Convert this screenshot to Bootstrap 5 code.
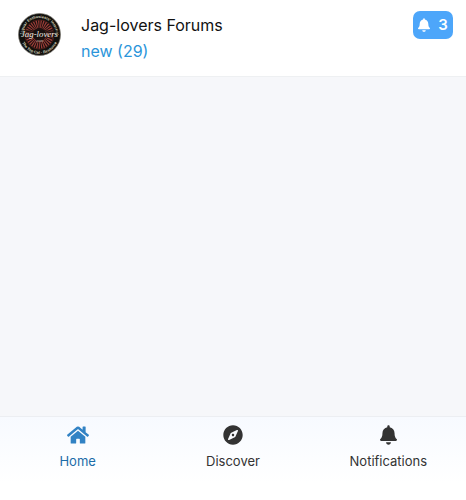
<!DOCTYPE html>
<html lang="en">
<head>
<meta charset="utf-8">
<meta name="viewport" content="width=device-width, initial-scale=1">
<title>Forums</title>
<link href="https://cdn.jsdelivr.net/npm/bootstrap@5.3.0/dist/css/bootstrap.min.css" rel="stylesheet">
<style>
body { font-family: Inter, "Liberation Sans", sans-serif; background: #f6f7fa; color: #111; }
.site-row { padding: 11px 13px 12px 18px; border-bottom: 1px solid #eef0f2; }
.site-logo { width: 43px; height: 45px; margin-top: 1px; margin-right: 20px; }
.site-text { font-size: 16px; line-height: 26px; }
.site-text a { color: #2b95da; }
.site-name { margin-top: 1px; }
.alert-count { background: #4da6fa; color: #fff; width: 40px; height: 28px; border-radius: 7px; font-size: 15px; font-weight: 600; line-height: 28px; }
.tab-bar { background: linear-gradient(#f7faff, #fff 80%); border-top: 1px solid #eceef2; padding: 8px 0 29px; }
.tab-item { color: #333; font-size: 13px; line-height: 20px; }
.tab-item svg { margin-bottom: 6px; }
.tab-item.active { color: #1b6ca8; }
.tab-item.active svg { color: #3182c4; }
</style>
<script src="https://cdn.jsdelivr.net/npm/bootstrap@5.3.0/dist/js/bootstrap.bundle.min.js"></script>
</head>
<body class="d-flex flex-column min-vh-100">
<header class="site-row d-flex align-items-start bg-white">
  <svg class="site-logo flex-shrink-0" viewBox="0 0 44 44" aria-label="Jag-lovers logo" role="img">
    <defs>
      <path id="arcTop" d="M5.500 25A16.800 16.800 0 1 1 38.500 25"/>
      <path id="arcBottom" d="M2.600 25A19.600 19.600 0 0 0 41.400 25"/>
    </defs>
    <circle cx="22" cy="22" r="21.500" fill="#11100d" stroke="#77746b" stroke-width=".7"/>
    <circle cx="22" cy="22" r="10.500" fill="none" stroke="#9c3c38" stroke-width="8" stroke-dasharray="1.100 .9"/>
    <circle cx="22" cy="22" r="15" fill="none" stroke="#5d211e" stroke-width=".7"/>
    <circle cx="22" cy="22" r="6.500" fill="#1d1110"/>
    <g fill="#d8d3bd" font-family="Liberation Sans, sans-serif" font-weight="700" font-size="4">
      <text text-anchor="middle"><textPath href="#arcTop" startOffset="50%">Jaguar Enthusiasts' Internet</textPath></text>
      <text text-anchor="middle"><textPath href="#arcBottom" startOffset="50%">The Top Cat · Resource</textPath></text>
    </g>
    <path d="M3 17.500h38v8H3z" fill="#11100d" opacity=".5"/>
    <text x="22" y="24.500" text-anchor="middle" fill="#f2eee4" font-family="Liberation Serif, serif" font-style="italic" font-size="9">Jag-lovers</text>
    <text x="22" y="29.500" text-anchor="middle" fill="#c9b8ab" font-family="Liberation Serif, serif" font-size="4">.com</text>
  </svg>
  <div class="site-text flex-grow-1">
    <div class="site-name">Jag-lovers Forums</div>
    <a href="#" class="text-decoration-none">new (29)</a>
  </div>
  <button type="button" class="alert-count btn p-0 border-0 d-flex align-items-center justify-content-center" aria-label="3 notifications">
    <svg class="me-2" width="12" height="14" viewBox="0 0 448 512" fill="currentColor" aria-hidden="true"><path d="M224 512c35.320 0 63.970-28.650 63.970-64H160.030c0 35.350 28.650 64 63.970 64zm215.390-149.710c-19.320-20.760-55.470-51.990-55.470-154.290 0-77.700-54.480-139.900-127.940-155.160V32c0-17.670-14.320-32-31.980-32s-31.980 14.330-31.980 32v20.840C118.560 68.100 64.080 130.300 64.080 208c0 102.300-36.150 133.530-55.470 154.290-6 6.450-8.660 14.160-8.610 21.710.11 16.400 12.980 32 32.100 32h383.800c19.120 0 32-15.600 32.100-32 .05-7.550-2.610-15.270-8.610-21.710z"/></svg><span>3</span>
  </button>
</header>
<main class="flex-grow-1"></main>
<nav class="tab-bar">
  <div class="row g-0 text-center">
    <a href="#" class="tab-item active col d-flex flex-column align-items-center text-decoration-none" aria-current="page">
      <svg width="22" height="20" viewBox="0 0 576 512" fill="currentColor" aria-hidden="true"><path d="M280.370 148.260L96 300.110V464a16 16 0 0 0 16 16l112.060-.29a16 16 0 0 0 15.920-16V368a16 16 0 0 1 16-16h64a16 16 0 0 1 16 16v95.640a16 16 0 0 0 16 16.050L464 480a16 16 0 0 0 16-16V300L295.670 148.260a12.190 12.190 0 0 0-15.300 0zM571.600 251.470L488 182.560V44.050a12 12 0 0 0-12-12h-56a12 12 0 0 0-12 12v72.610L318.470 43a48 48 0 0 0-61 0L4.340 251.470a12 12 0 0 0-1.600 16.900l25.500 31A12 12 0 0 0 45.150 301l235.220-193.740a12.190 12.190 0 0 1 15.300 0L530.900 301a12 12 0 0 0 16.900-1.600l25.500-31a12 12 0 0 0-1.700-16.930z"/></svg>
      <span>Home</span>
    </a>
    <a href="#" class="tab-item col d-flex flex-column align-items-center text-decoration-none">
      <svg width="20" height="20" viewBox="0 0 512 512" fill="currentColor" aria-hidden="true"><path transform="translate(8)" d="M225.380 233.370c-12.500 12.500-12.500 32.760 0 45.250 12.490 12.500 32.760 12.500 45.250 0 12.500-12.500 12.500-32.760 0-45.250-12.500-12.490-32.760-12.490-45.250 0zM248 8C111.030 8 0 119.030 0 256s111.030 248 248 248 248-111.030 248-248S384.970 8 248 8zm126.140 148.050L308.170 300.400a31.938 31.938 0 0 1-15.770 15.770l-144.340 65.970c-16.650 7.610-33.810-9.550-26.200-26.200l65.980-144.350a31.938 31.938 0 0 1 15.770-15.770l144.340-65.970c16.650-7.600 33.800 9.550 26.190 26.200z"/></svg>
      <span>Discover</span>
    </a>
    <a href="#" class="tab-item col d-flex flex-column align-items-center text-decoration-none">
      <svg width="17" height="20" viewBox="0 0 448 512" fill="currentColor" aria-hidden="true"><path d="M224 512c35.320 0 63.970-28.650 63.970-64H160.030c0 35.350 28.650 64 63.970 64zm215.390-149.710c-19.320-20.760-55.470-51.990-55.470-154.290 0-77.700-54.480-139.900-127.940-155.160V32c0-17.670-14.320-32-31.980-32s-31.980 14.330-31.980 32v20.840C118.560 68.100 64.080 130.300 64.080 208c0 102.300-36.150 133.530-55.470 154.290-6 6.450-8.660 14.160-8.610 21.710.11 16.400 12.980 32 32.100 32h383.800c19.120 0 32-15.600 32.100-32 .05-7.550-2.610-15.270-8.610-21.710z"/></svg>
      <span>Notifications</span>
    </a>
  </div>
</nav>
</body>
</html>
